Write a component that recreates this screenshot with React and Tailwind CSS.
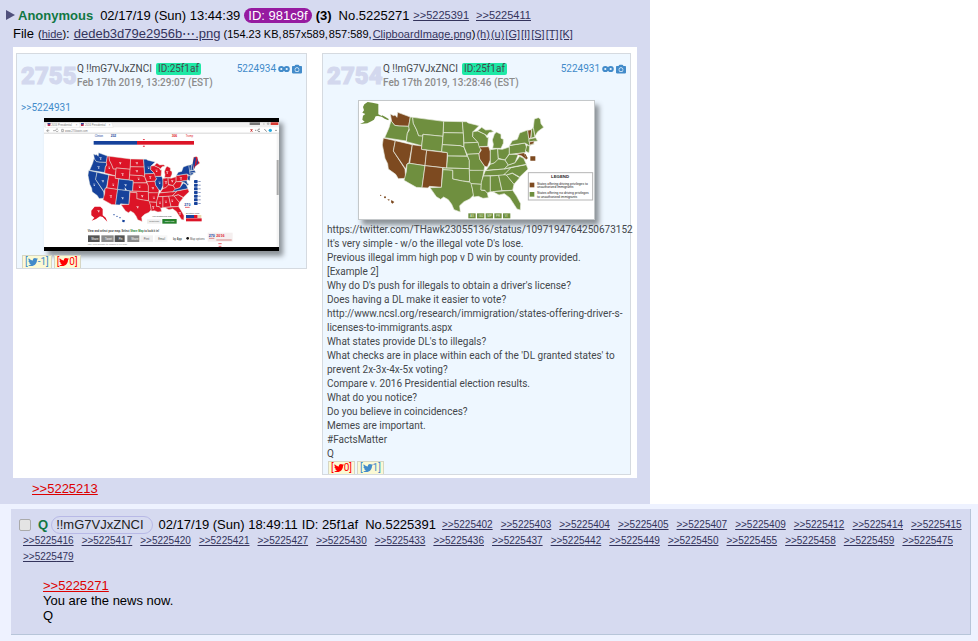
import React from "react";
import { FaTwitter, FaCamera } from "react-icons/fa";

const STATES = {
  WA: "124,57 134,62 138,60 144,67 146,52 184,66 179,94 150,93 137,91 128,80",
  OR: "126,77 137,91 150,93 179,94 181,100 175,115 172,138 107,128 120,98",
  CA: "103,129 139,137 133,168 168,222 170,250 148,251 140,238 118,222 116,206 108,190 100,150",
  NV: "139,137 190,149 180,203 174,207 170,222 133,168",
  ID: "184,66 191,67 193,85 203,105 209,122 222,122 218,152 172,140 175,115 181,105 179,94",
  MT: "191,67 284,79 282,124 222,118 220,123 209,122 203,105 193,85",
  WY: "222,118 282,124 278,170 217,163",
  UT: "190,149 218,153 217,163 233,166 228,212 182,205",
  AZ: "182,205 228,212 219,278 202,277 165,256 172,230 174,207",
  CO: "233,166 295,173 293,219 228,212",
  NM: "228,212 281,218 277,277 241,274 237,279 219,278",
  ND: "284,79 340,80 343,114 283,113",
  SD: "283,113 343,114 345,156 333,152 280,149",
  NE: "280,149 333,152 345,156 354,183 296,183 295,173 278,170",
  KS: "296,183 356,184 361,196 361,221 293,219",
  OK: "282,219 361,221 362,260 340,258 311,252 311,226 282,224",
  TX: "282,224 311,226 311,252 340,258 366,262 370,280 374,300 362,312 345,320 332,332 334,351 315,344 308,328 298,314 284,306 275,313 262,305 243,278 277,277",
  MN: "340,80 352,80 358,84 390,92 372,110 371,125 387,142 345,144 343,114",
  IA: "345,144 387,142 397,160 390,176 354,178 345,156",
  MO: "354,178 390,176 392,192 407,214 405,228 361,226 361,196 356,184",
  AR: "361,226 405,226 397,268 366,266 362,260",
  LA: "366,266 397,268 396,285 414,288 418,308 402,310 388,304 374,306 370,280",
  WI: "372,110 386,108 408,118 414,128 418,126 416,154 390,155 387,142 371,125",
  UP: "386,107 398,97 410,105 426,104 434,110 420,113 414,122 408,118",
  MI: "431,160 433,148 430,135 436,118 442,111 456,118 456,130 463,133 463,145 456,160",
  IL: "390,156 419,155 424,170 424,195 415,216 407,214 392,192 390,176 397,165",
  IN: "424,164 446,161 448,194 436,204 424,208",
  OH: "446,162 460,163 481,156 481,176 468,195 448,190",
  KY: "411,226 424,208 436,204 448,192 468,195 478,210 466,222",
  TN: "403,243 409,227 466,222 486,218 470,235 462,241",
  MS: "403,243 424,243 424,290 414,294 408,286 396,285 397,262",
  AL: "424,243 449,241 459,287 432,290 424,290",
  GA: "449,241 472,239 495,268 491,286 459,287",
  FL: "432,290 491,286 503,304 515,326 514,345 504,342 482,308 466,296 450,300",
  SC: "472,240 490,235 512,248 495,268",
  NC: "466,238 486,218 532,209 537,222 512,246 490,234 472,240",
  VA: "466,222 478,210 498,203 512,184 524,190 532,208 486,217",
  WV: "468,195 481,178 508,178 498,203 478,210",
  PA: "481,152 528,144 534,160 528,173 481,178",
  NY: "482,151 490,137 505,133 512,114 536,105 542,145 556,147 540,152 528,144",
  NJ: "534,150 542,154 540,174 529,168",
  MD: "500,177 526,173 530,186 536,188 532,194 518,183",
  VT: "536,106 548,104 545,130 539,130",
  NH: "548,103 553,97 558,126 546,130",
  MA: "540,132 560,128 566,138 540,141",
  CT: "541,141 556,138 554,146 542,150",
  ME: "553,97 556,72 568,68 574,72 576,86 584,97 566,110 558,124",
};

const BLUE = ["WA", "OR", "CA", "NV", "CO", "NM", "MN", "IL", "NY", "VT", "NH", "MA", "CT", "NJ", "MD", "VA"];
const BROWN = ["WA", "CA", "NV", "UT", "CO", "NM", "IL", "VT", "CT", "MD"];

function States({ marked, on, off }) {
  return Object.entries(STATES).map(([k, pts]) => (
    <polygon key={k} points={pts} fill={marked.includes(k) ? on : off} stroke="#e8ebe0" strokeWidth="2" strokeLinejoin="round" />
  ));
}

function ElectionMap() {
  const labels = [[274, 175], [268, 202], [255, 254], [281, 243], [349, 255], [340, 294], [333, 189], [383, 189], [418, 203], [340, 223], [312, 254], [305, 289], [385, 321], [399, 288], [391, 260], [383, 213], [388, 236], [431, 264], [423, 232], [451, 248], [300, 203], [442, 212], [474, 217], [470, 247], [489, 243], [434, 293], [452, 308], [470, 305], [489, 302], [432, 322], [512, 340], [268, 333], [515, 235]];
  return (
    <svg viewBox="105 54 705 399" className="block h-[133px] w-[235px] shadow-[4px_5px_5px_#8c9298]" role="img" aria-label="Electoral map" fontFamily="Liberation Sans, sans-serif">
      <rect x="105" y="54" width="705" height="399" fill="#fff" />
      <rect x="105" y="54" width="705" height="13" fill="#000" />
      <rect x="105" y="441" width="705" height="12" fill="#000" />
      <rect x="105" y="67" width="705" height="15" fill="#f0f0f0" />
      <rect x="105" y="98" width="705" height="3" fill="#d5d5d5" />
      <path d="M108 82l5-14h98l5 14zM211 82l5-14h92l5 14z" fill="#fff" stroke="#d4d4d4" />
      <rect x="116" y="69" width="8" height="9" fill="#c0284a" /><rect x="116" y="69" width="8" height="4" fill="#2a4ba0" />
      <rect x="216" y="69" width="8" height="9" fill="#c0284a" /><rect x="216" y="69" width="8" height="4" fill="#2a4ba0" />
      <g fontSize="8" fill="#777">
        <text x="127" y="77">2016 Presidential</text><text x="200" y="77">×</text>
        <text x="228" y="77">2016 Presidential</text><text x="299" y="77">×</text>
        <text x="168" y="95">www.270towin.com</text>
      </g>
      <rect x="722" y="67" width="31" height="8" fill="#777" /><rect x="785" y="67" width="23" height="8" fill="#d73a32" />
      <path d="M762 72h5M775 69h5v4h-5z" stroke="#555" fill="none" />
      <path d="M118 88l-5 4 5 4M113 92h8M132 92h7M147 88a4 4 0 1 0 1 4M158 88h5v7h-5z" stroke="#888" strokeWidth="2" fill="none" />
      <path d="M725 87l5 8M730 87l-5 8" stroke="#c33" strokeWidth="3" /><path d="M738 91h4M753 88a4 4 0 1 0 0 6M766 87l7 8" stroke="#555" strokeWidth="2" fill="none" /><circle cx="784" cy="91" r="5" fill="#25a9e0" /><circle cx="801" cy="91" r="2" fill="#555" />
      <rect x="803" y="101" width="7" height="340" fill="#f4f4f4" /><rect x="803" y="180" width="6" height="105" fill="#aaa" />
      <text x="257" y="112" fontSize="8" fill="#16429b">Clinton</text><text x="305" y="112" fontSize="10" fontWeight="bold" fill="#16429b">232</text>
      <text x="488" y="112" fontSize="10" fontWeight="bold" fill="#dc1427">306</text><text x="530" y="112" fontSize="8" fill="#dc1427">Trump</text>
      <rect x="254" y="123" width="130" height="11" fill="#16429b" /><rect x="384" y="123" width="171" height="11" fill="#dc1427" />
      <path d="M401 117h7l-3 4zM401 140h7l-3-4z" fill="#dc1427" />
      <g transform="translate(167.6 122.5) scale(.694 .689)">
        <States marked={BLUE} on="#16429b" off="#dc1427" />
        <path d="M553 97l6-24 8 0-8 50zM572 76l4 20-8 12z" fill="#16429b" />
      </g>
      <path d="M247 332l10-12 17 0 7 7v19l9 7 5 12-14-14-8-2-12 8-13 5 8-9-9-7z" fill="#dc1427" />
      <g fill="#16429b"><circle cx="315" cy="344" r="2" /><circle cx="324" cy="349" r="2" /><circle cx="333" cy="353" r="2" /><path d="M340 359l8 2-2 6-6-1z" /></g>
      <g fill="#fff" opacity=".7">{labels.map(([x, y]) => <path key={x + "-" + y} d={`M${x - 3} ${y - 3}h7v2h-7zM${x - 1} ${y}h4v4h-4z`} />)}</g>
      {[240, 251, 262, 273, 284, 295, 306].map((y) => <g key={y}><rect x="555" y={y} width="11" height="9" rx="2" fill="#16429b" /><rect x="568" y={y + 3} width="7" height="3" fill="#8a9ac0" /></g>)}
      <text x="526" y="318" fontSize="11" fontWeight="bold" fill="#16429b">270</text><path d="M528 322h14" stroke="#dc1427" strokeWidth="2" />
      <text x="531" y="343" fontSize="6" fill="#333">Electoral Votes</text>
      <rect x="531" y="345" width="24" height="9" fill="#16429b" /><rect x="555" y="345" width="11" height="9" fill="#dc1427" /><rect x="566" y="345" width="11" height="9" fill="#e9d7b0" /><rect x="531" y="355" width="47" height="9" fill="#dc1427" />
      <text x="429" y="352" fontSize="6" fill="#333">Your Customized Map</text>
      <rect x="414" y="358" width="43" height="13" fill="#eee" /><text x="421" y="367" fontSize="6" fill="#555">Reset Map</text>
      <rect x="460" y="357" width="43" height="14" fill="#25812c" /><text x="467" y="367" fontSize="6" fill="#fff">Share Map</text>
      <text x="236" y="396" fontSize="8" fontWeight="bold" fill="#333">View and select your map. Select <tspan fill="#25812c">Share Map</tspan> to lock it in!</text>
      {["Share", "Tweet", "Pin", "Share"].map((t, i) => <g key={i}><rect x={[237, 277, 317, 355][i]} y="406" width={[35, 37, 30, 36][i]} height="20" fill={i % 2 ? "#8a8a8a" : "#555"} /><text x={[247, 288, 329, 367][i]} y="419" fontSize="8" fill="#fff">{t}</text></g>)}
      <rect x="394" y="406" width="38" height="20" fill="#f0f0f0" /><rect x="437" y="406" width="38" height="20" fill="#f7f7f7" />
      <g fontSize="8" fill="#555"><text x="404" y="419">Print</text><text x="448" y="419">Email</text><text x="492" y="419" fontWeight="bold">by App</text><text x="543" y="419">Map options</text></g>
      <circle cx="536" cy="415" r="4" fill="#111" />
      <text x="236" y="434" fontSize="7" fill="#777">Use your website to embed a live map</text>
      <rect x="596" y="398" width="75" height="27" fill="#f5efef" />
      <text x="599" y="412" fontSize="11" fontWeight="bold" fill="#16429b">270</text><text x="622" y="412" fontSize="11" fontWeight="bold" fill="#dc1427">2016</text>
      <path d="M600 415h16M622 420h46" stroke="#c55" strokeWidth="2" /><path d="M628 431h10M629 439h8" stroke="#dc1427" strokeWidth="2" />
      <path d="M347 262l1 9 3-2 3 1z" fill="#fff" />
    </svg>
  );
}

function LicenseMap() {
  return (
    <svg viewBox="27 15 711 360" className="block h-[120px] w-[237px] shadow-[4px_5px_5px_#8c9298]" role="img" aria-label="Driving privileges map" fontFamily="Liberation Sans, sans-serif">
      <rect x="28.5" y="16.5" width="708" height="357" fill="#fff" stroke="#c4c8ca" strokeWidth="3" />
      <States marked={BROWN} on="#7d4a20" off="#6f8f3f" />
      <path d="M42 36l4-8 10-7 14 2 18 4v31l12 6 1 2-14-3-7 1-5 10-8 5-12 6-22 2 14-7-7-6 2-12 7-5-9-4 5-7z" fill="#6f8f3f" />
      <path d="M99 61l9 4 11 7-1 4-11-5-9-6z" fill="#6f8f3f" />
      <path d="M526 176l4 2 6 12-4 2zM544 184h15v13h-15z" fill="#7d4a20" />
      <g fill="#7d4a20"><circle cx="95" cy="301" r="2" /><circle cx="108" cy="307" r="3" /><path d="M115 312l8 2-4 3zM127 315l9 6-6 5-4-4z" /></g>
      <rect x="538" y="233" width="193" height="82" fill="#fff" stroke="#b5b5b5" strokeWidth="3" />
      <text x="606" y="249" fontSize="13" fontWeight="bold" fill="#222">LEGEND</text>
      <rect x="542" y="263" width="14" height="14" fill="#7d4a20" /><rect x="542" y="291" width="14" height="14" fill="#6f8f3f" />
      <g fontSize="10" fill="#222">
        <text x="564" y="270">States offering driving privileges to</text><text x="564" y="280">unauthorized immigrants</text>
        <text x="564" y="298">States offering no driving privileges</text><text x="564" y="308">to unauthorized immigrants</text>
      </g>
      {["AS", "GU", "MP", "PR", "VI"].map((t, i) => <g key={t}><rect x={358 + i * 26} y="355" width="22" height="15" fill="#6f8f3f" /><text x={363 + i * 26} y="366" fontSize="9" fill="#dfe8cc">{t}</text></g>)}
    </svg>
  );
}

function Votes({ items }) {
  return (
    <div className="flex gap-0.5 pl-px text-[10px] leading-3">
      {items.map(([n, red]) => (
        <button key={n} type="button" className={`flex items-center border border-b-0 border-[#d6d6c4] bg-[#fbf9d4] px-0.5 ${red ? "text-[#f00]" : "text-[#428bca]"}`}>
          [<FaTwitter className="size-2.5" />{n}]
        </button>
      ))}
    </div>
  );
}

function Card({ number, date, post, children, className }) {
  return (
    <article className={`border border-[#d5dae0] bg-[#eef7ff] px-1 pt-2 ${className}`}>
      <header className="flex h-8 items-start">
        <span className="h-8 w-[56px] shrink-0 whitespace-nowrap font-['Roboto',sans-serif] text-[24px] leading-7 font-black text-[#d3d8ee] [-webkit-text-stroke:1px_#d3d8ee]">{number}</span>
        <div className="flex grow flex-col text-[10px] leading-[14px]">
          <div className="flex items-center gap-1">
            <span>Q !!mG7VJxZNCI</span>
            <span className="rounded-xs bg-[#1fe9a6] px-0.5 leading-3">ID:25f1af</span>
            <span className="ml-auto flex items-center gap-0.5 text-[#428bca]">
              <a href="#source">{post}</a>
              <svg viewBox="0 0 12 8" className="h-2 w-3" fill="none" stroke="currentColor" strokeWidth="2"><circle cx="3.3" cy="4" r="2.1" /><circle cx="8.7" cy="4" r="2.1" /></svg>
              <FaCamera className="size-2.5" />
            </span>
          </div>
          <time className="font-medium text-[#8c8c8c]">{date}</time>
        </div>
      </header>
      {children}
    </article>
  );
}

const LINES = ["https://twitter.com/THawk23055136/status/1097194764250673152", "It's very simple - w/o the illegal vote D's lose.", "Previous illegal imm high pop v D win by county provided.", "[Example 2]", "Why do D's push for illegals to obtain a driver's license?", "Does having a DL make it easier to vote?", "http://www.ncsl.org/research/immigration/states-offering-driver-s-", "licenses-to-immigrants.aspx", "What states provide DL's to illegals?", "What checks are in place within each of the 'DL granted states' to", "prevent 2x-3x-4x-5x voting?", "Compare v. 2016 Presidential election results.", "What do you notice?", "Do you believe in coincidences?", "Memes are important.", "#FactsMatter", "Q"];

const REPLIES = [402, 403, 404, 405, 407, 409, 412, 414, 415, 416, 417, 420, 421, 427, 430, 433, 436, 437, 442, 449, 450, 455, 458, 459, 475, 479];

export default function App() {
  return (
    <main className="min-h-screen bg-[#eef2ff] font-['Liberation_Sans',Arial,sans-serif] text-[13px] leading-[15px] text-black">
      <div className="bg-white">
        <article className="w-[650px] max-w-full bg-[#d6daf0] pt-1.5 pb-2">
          <header className="flex h-[18px] items-center pl-1.5 whitespace-nowrap">
            <svg viewBox="0 0 9 10" className="mr-[3px] h-2.5 w-[9px]"><path d="M0 0l9 5-9 5z" fill="#50507c" /></svg>
            <b className="text-[#117743]">Anonymous</b>
            <time className="ml-[7px]">02/17/19 (Sun) 13:44:39</time>
            <span className="ml-1 rounded-full bg-[#961ba0] px-1 text-white">ID: 981c9f</span>
            <b className="ml-1">(3)</b>
            <span className="ml-[7px]">No.5225271</span>
            <span className="ml-1 flex gap-[7px] text-[11px] text-[#34345c] underline"><a href="#p391">&gt;&gt;5225391</a><a href="#p411">&gt;&gt;5225411</a></span>
          </header>
          <div className="mt-0.5 flex h-[18px] items-baseline pl-[13px] whitespace-nowrap">
            <span>File</span>
            <span className="ml-1 text-[11px]">(<a href="#hide" className="text-[#34345c] underline">hide</a>)</span>:
            <a href="#file" className="ml-1 text-[#34345c] underline">dedeb3d79e2956b⋯.png</a>
            <span className="ml-[3px] flex gap-px text-[11px]">
              <span>(154.23 KB,</span><span>857x589,</span><span>857:589,</span>
              <span><a href="#clip" className="text-[#34345c] underline">ClipboardImage.png</a>)</span>
              {["(h)", "(u)", "[G]", "[I]", "[S]", "[T]", "[K]"].map((t) => <a key={t} href="#search" className="text-[#34345c] underline">{t}</a>)}
            </span>
          </div>
          <div className="mx-[13px] mt-[3px] flex items-start gap-[15px] bg-white pt-1.5 pr-1.5 pb-[3px] pl-[3px] font-['Roboto',sans-serif] text-[10px] leading-[14px] text-[#44474b]">
            <Card number="2755" date="Feb 17th 2019, 13:29:07 (EST)" post="5224934" className="w-[291px]">
              <a href="#quote" className="mt-[7px] block text-[#428bca]">&gt;&gt;5224931</a>
              <div className="mt-[3px] mb-1 flex justify-center"><ElectionMap /></div>
              <Votes items={[["-1", false], ["0", true]]} />
            </Card>
            <Card number="2754" date="Feb 17th 2019, 13:28:46 (EST)" post="5224931" className="min-w-0 flex-1">
              <div className="mt-1.5 mb-[3px] flex justify-center"><LicenseMap /></div>
              {LINES.map((l) => <p key={l} className="whitespace-nowrap">{l}</p>)}
              <Votes items={[["0", true], ["1", false]]} />
            </Card>
          </div>
          <a href="#p213" className="mt-[3px] ml-8 inline-block text-[#d00] underline">&gt;&gt;5225213</a>
        </article>
      </div>
      <article className="mt-[5px] mr-[7px] ml-[11px] border-r border-b border-[#b7c5d9] bg-[#d6daf0] pt-2 pb-[11px] pl-3">
        <header className="flex flex-wrap items-center gap-x-2 text-[10px] leading-4 text-[#34345c]">
          <div className="-ml-1 -mr-0.5 flex h-4 items-center text-[13px] leading-4 text-black">
            <input type="checkbox" aria-label="Select post 5225391" className="size-3 appearance-none rounded-xs border border-[#aaa] bg-[#e4e4e4]" />
            <b className="ml-[7px] text-[#117743]">Q</b>
            <span className="ml-[3px] rounded-full border border-[#b8b9e6] pr-2 pl-1 text-[#222]">!!mG7VJxZNCI</span>
            <time className="ml-1.5">02/17/19 (Sun) 18:49:11</time>
            <span className="ml-1">ID: 25f1af</span>
            <span className="ml-[7px]">No.5225391</span>
          </div>
          {REPLIES.map((n) => <a key={n} href={`#p${n}`} className="underline">&gt;&gt;5225{n}</a>)}
        </header>
        <div className="mt-[13px] pl-5">
          <a href="#p271" className="text-[#d00] underline">&gt;&gt;5225271</a>
          <p>You are the news now.</p>
          <p>Q</p>
        </div>
      </article>
    </main>
  );
}
